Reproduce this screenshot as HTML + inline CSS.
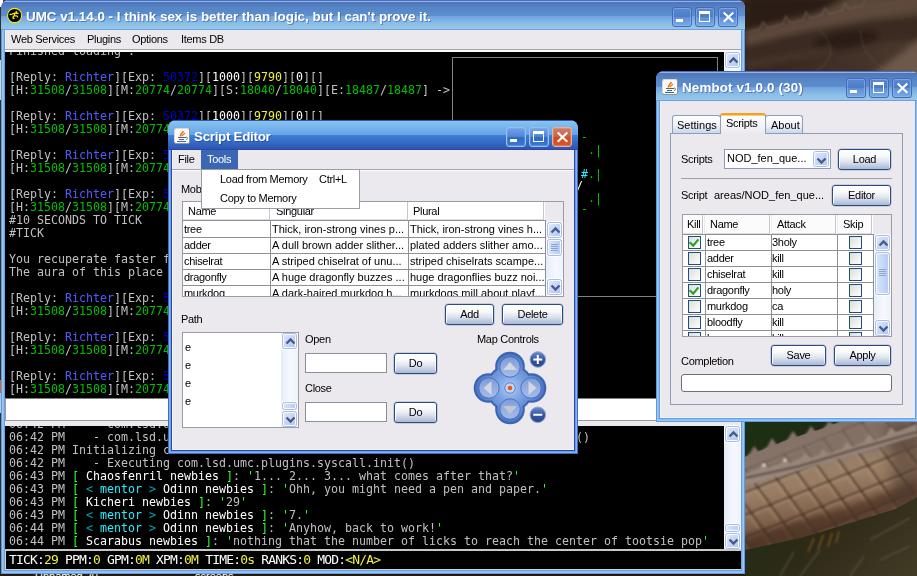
<!DOCTYPE html>
<html>
<head>
<meta charset="utf-8">
<title>UMC</title>
<style>
html,body{margin:0;padding:0;}
body{width:917px;height:576px;position:relative;overflow:hidden;background:#4a382e;font-family:"Liberation Sans",sans-serif;font-size:11px;letter-spacing:-0.3px;color:#000;}
div,span,i{box-sizing:border-box;}
.a{position:absolute;}
.win,#pop{will-change:transform;}
.pg{position:absolute;width:0;height:0;}
/* ---------- desktop ---------- */
#desk{position:absolute;left:0;top:0;width:917px;height:576px;overflow:hidden;background:#46352b;}
/* ---------- windows ---------- */
.win{position:absolute;border-radius:8px 8px 0 0;overflow:hidden;background:#8ebcf0;}
.win .tb{position:absolute;left:0;top:0;right:0;height:30px;
 background:linear-gradient(to bottom,#4a6cc0 0,#4a6cc0 1px,#8fb6e8 1px,#8fb6e8 2px,#4f74b8 2px,#5684c4 8px,#5c90d0 16px,#72a2de 16px,#7cace4 19px,#8cc0e6 24px,#94c8e8 29px,#6f9fe0 29px,#6f9fe0 30px);}
.win .edge{position:absolute;left:0;top:24px;right:0;bottom:0;
 background:#8cbcec;box-shadow:inset 0 0 0 1px #5a9aec,inset 0 0 0 2px #98c8ee,inset 0 0 0 3px #8cbeec,inset 0 0 0 4px #6a9ee8;}
.win .client{position:absolute;left:4px;top:30px;right:4px;bottom:4px;background:#ebe9ed;overflow:hidden;box-shadow:inset 1px -1px 0 0 #f6f2f2;}
.win.act{background:#3a6cd0;}
.win.act .tb{background:linear-gradient(to bottom,#2f55b8 0,#2f55b8 1px,#90ccf2 1px,#84c2ee 2px,#66a2e8 15px,#3a82d6 15px,#3054b4 29px,#2848a4 29px,#2848a4 30px);}
.win.act .edge{background:#3f72d6;box-shadow:inset 0 0 0 1px #3a6cd8,inset 0 0 0 2px #8ab4e8,inset 0 0 0 3px #6a9ae0,inset 0 0 0 4px #2a4ca8;}
.ttl{position:absolute;top:8px;height:18px;line-height:18px;color:#fff;font-weight:bold;font-size:13.4px;white-space:nowrap;text-shadow:1px 1px 0 rgba(20,40,110,.4);}
.cb{position:absolute;top:6.600px;width:20px;height:20px;border-radius:3px;border:1px solid #4668b8;
 background:linear-gradient(to bottom,#5c88d0 0,#4c7cc8 48%,#5c90d6 52%,#7aaae4 100%);box-shadow:inset 0 0 0 1px rgba(150,190,240,.55);}
.win.act .cb{border-color:#98c0ee;background:linear-gradient(to bottom,#74a4e6 0,#4e88da 46%,#2c68c6 54%,#3c7ad2 100%);box-shadow:inset 0 0 0 1px rgba(140,180,236,.35);}
.win.act .cb.x{border-color:#e8b0a0;background:linear-gradient(to bottom,#cc8068 0,#c86448 46%,#d8481c 54%,#d4582e 100%);box-shadow:inset 0 0 0 1px rgba(240,170,150,.35);}
.cb i{position:absolute;display:block;}
.cb.mn i{left:3px;top:11.500px;width:7px;height:3px;background:#fff;}
.cb.mx i{left:3px;top:3.500px;width:11px;height:10.500px;border:1px solid #fff;border-top-width:3px;}
.cb.x svg{position:absolute;left:3px;top:3px;}
/* ---------- generic widgets ---------- */
.t{position:absolute;white-space:nowrap;line-height:14px;height:14px;}
.btn{position:absolute;height:21px;border:1px solid #2a4c86;border-radius:3px;text-align:center;line-height:18px;
 background:linear-gradient(to bottom,#ffffff 0,#f6f8fb 35%,#dde3ee 62%,#a9b8d3 100%);box-shadow:inset 1px 1px 0 0 rgba(255,255,255,.9),inset -1px 0 0 0 rgba(255,255,255,.6),0 0 0 .5px rgba(42,76,134,.35);}
.w0{letter-spacing:0;}
.tf{position:absolute;background:#fff;border:1px solid #8b8f9c;}
.tab{position:absolute;border:1px solid #8e9db8;border-bottom:none;border-radius:3px 3px 0 0;background:linear-gradient(to bottom,#ffffff 0,#f2f4f9 45%,#c6d4ea 100%);}
.tab.sel{background:linear-gradient(to bottom,#fdfdfe 0,#f4f3f7 60%,#ebe9ed 100%);border-top:2px solid #f0a030;box-shadow:inset 0 1px 0 #ffcf5c;}
.th{position:absolute;background:#fbfbfc;border-right:1px solid #fff;box-shadow:inset -1px 0 0 #c8c6cc, inset 0 -1px 0 #dddbe0;}
.gl{background:#8f8f96;}
.ck{position:absolute;width:13px;height:13px;border:1px solid #1c5180;background:linear-gradient(135deg,#dcdcd7,#fff);}
.ck.on::after{content:"";position:absolute;left:2px;top:0px;width:4px;height:7px;border:solid #21a121;border-width:0 2px 2px 0;transform:rotate(40deg);}
/* scrollbars */
.sb{position:absolute;width:17px;background:linear-gradient(to right,#e4ecfb 0,#f6f8fe 55%,#eff3fd 100%);}
.sbb{position:absolute;left:1px;width:15px;height:16px;border:1px solid #a8bce6;border-radius:2.500px;
 background:linear-gradient(135deg,#e2eafd 0,#c6d6f8 50%,#b0c5ee 100%);box-shadow:inset 0 0 0 1px rgba(255,255,255,.85),0 0 0 1px rgba(255,255,255,.9);}
.sbb svg{position:absolute;left:2px;top:3px;}
.sbt{position:absolute;left:1px;width:15px;border:1px solid #a8bce6;border-radius:2.500px;
 background:linear-gradient(to right,#dbe6fc 0,#c6d6f8 55%,#b6c9f0 100%);box-shadow:inset 0 0 0 1px rgba(255,255,255,.85),0 0 0 1px rgba(255,255,255,.9);}
/* mono text */
.mono{letter-spacing:0;font-family:"DejaVu Sans Mono","Liberation Mono",monospace;font-size:11.63px;color:#c0c0c0;}
.ln{height:13px;line-height:13px;white-space:pre;}
.bl{color:#5858ff;}.db{color:#0000c8;}.w{color:#fff;}.y{color:#f0f040;}.gr{color:#00c000;}.lg{color:#30ff30;}.cy{color:#20f0ff;}.dc{color:#00a4b4;}
</style>
</head>
<body>
<div id="desk"></div>
<svg class="a" style="left:0;top:0" width="917" height="576" viewBox="0 0 917 576">
 <defs>
  <filter id="b3" x="-20%" y="-20%" width="140%" height="140%"><feGaussianBlur stdDeviation="3"/></filter>
  <filter id="b1" x="-20%" y="-20%" width="140%" height="140%"><feGaussianBlur stdDeviation="1.2"/></filter>
  <filter id="b6" x="-30%" y="-30%" width="160%" height="160%"><feGaussianBlur stdDeviation="6"/></filter>
  <linearGradient id="tr" x1="0" y1="0" x2="1" y2="0"><stop offset="0" stop-color="#34241c"/><stop offset="1" stop-color="#4c3a30"/></linearGradient>
  <linearGradient id="tail" x1="0" y1="0" x2=".25" y2="1"><stop offset="0" stop-color="#7c6a62"/><stop offset=".3" stop-color="#94806c"/><stop offset=".55" stop-color="#9a7e64"/><stop offset=".8" stop-color="#7c5e48"/><stop offset="1" stop-color="#4a3222"/></linearGradient>
  <linearGradient id="grass" x1="0" y1="0" x2="1" y2="1"><stop offset="0" stop-color="#1c3012"/><stop offset=".25" stop-color="#1e2c14"/><stop offset=".6" stop-color="#2e2a18"/><stop offset="1" stop-color="#423c26"/></linearGradient>
  <pattern id="sc" width="21" height="21" patternUnits="userSpaceOnUse" patternTransform="rotate(-22) skewX(14)">
   <rect width="21" height="21" fill="none"/>
   <path d="M0 0H21M0 0V21" stroke="#3a281c" stroke-width="2.800" opacity=".85"/>
   <path d="M3 3H18V18" stroke="#c0a488" stroke-width="2" opacity=".3" fill="none"/>
  </pattern>
  <clipPath id="ctail"><path d="M745 457L760 451L790 439L822 429L842 421L917 421L917 497L895 509L850 523L800 538L745 550Z"/></clipPath>
 </defs>
 <!-- top right -->
 <rect x="745" y="0" width="172" height="72" fill="url(#tr)"/>
 <g filter="url(#b3)">
  <path d="M745 -4L880 -4L745 30Z" fill="#2c1f19"/>
  <path d="M850 -4L925 -4L925 24L800 40L780 34Z" fill="#594739"/>
  <path d="M745 32L800 19L860 6L917 -6L917 6L860 18L800 31L745 46Z" fill="#5e4a3d"/>
  <path d="M745 46L800 32L870 20L925 14L925 40L860 44L800 56L745 66Z" fill="#3b2a21"/>
  <ellipse cx="846" cy="40" rx="34" ry="9" fill="#2a1c16" opacity=".85" transform="rotate(-8 846 40)"/>
  <path d="M870 76L925 36L925 76Z" fill="#6e5848"/>
  <path d="M745 62L830 46L830 52L745 70Z" fill="#46342a"/>
 </g>
 <g filter="url(#b1)" stroke="#72604f" stroke-width="1.200" fill="none" opacity=".85">
  <path d="M745 33L760 29L763 22L767 28L783 24L786 16L790 23L803 20L806 12L810 18L822 15L825 8L829 14L842 11L845 3L849 9L862 6L866 0"/>
  <path d="M820 30C835 45 835 60 815 72M860 30C862 50 870 62 890 72" opacity=".45"/>
 </g>
 <!-- bottom right -->
 <rect x="745" y="420" width="172" height="156" fill="url(#grass)"/>
 <path d="M745 457L760 451L790 439L822 429L842 421L917 421L917 497L895 509L850 523L800 538L745 550Z" fill="url(#tail)"/>
 <g clip-path="url(#ctail)">
  <rect x="745" y="420" width="172" height="156" fill="url(#sc)" filter="url(#b1)"/>
  <path d="M745 452L760 446L790 433L822 424L836 421L917 421L917 450L860 452L800 466L745 486Z" fill="#7e6c64" opacity=".7" filter="url(#b3)"/>
  <path d="M745 535L800 520L850 506L917 480L917 500L850 525L745 552Z" fill="#4a3224" opacity=".7" filter="url(#b3)"/>
  <path d="M885 421L925 421L925 510L895 505Z" fill="#4e3a2e" opacity=".55" filter="url(#b6)"/>
 </g>
 <g filter="url(#b1)">
  <path d="M745 458L750 453L754 446L759 452L767 447L772 438L777 445L787 440L793 431L798 438L806 434L811 426L816 432L824 428L829 421L834 425L842 421L842 430L745 468Z" fill="#857269" filter="none"/>
  <path d="M745 474L758 469L764 463L768 468L780 464L785 458L789 463L800 459L805 453L810 458L819 455L823 449L828 454L842 449L847 442L852 447L864 442L869 434L874 440L886 435L891 427L896 432L917 424L917 436L745 486Z" fill="#9a8a80" opacity=".9"/>
  <path d="M745 478L800 466L860 448L917 432" stroke="#4e3a2e" stroke-width="2.500" fill="none" opacity=".7"/>
  <circle cx="764" cy="465" r="1.500" fill="#f0ece8"/><circle cx="785" cy="460" r="1.500" fill="#e8e4e0"/>
 </g>
 <g stroke="#8a5c24" stroke-width="1.500" opacity=".8" filter="url(#b1)">
  <path d="M808 552l6-14M818 550l5-15M828 547l4-14M836 543l3-12"/>
 </g>
 <g stroke="#5c5640" stroke-width="1.500" opacity=".7" filter="url(#b1)">
  <path d="M780 576l14-24M800 576l20-26M850 576l14-20M880 560l30-14M870 540l40-22"/>
 </g>
 <!-- left + bottom slivers of desktop -->
 <rect x="0" y="0" width="2" height="576" fill="#3a2c24"/>
 <rect x="0" y="0" width="3" height="7" fill="#fff"/>
 <rect x="0" y="380" width="2" height="13" fill="#d06c24"/>
 <rect x="0" y="393" width="2" height="6" fill="#9cc4f0"/>
 <rect x="0" y="399" width="2" height="14" fill="#c8c8c8"/>
 <rect x="0" y="60" width="2" height="40" fill="#d8d4cc"/>
 <rect x="0" y="574" width="745" height="2" fill="#2a170d"/>
</svg>
<div class="a" style="left:0;top:574px;width:745px;height:2px;overflow:hidden;color:#fff;font-size:11px;letter-spacing:0;"><span class="a" style="left:35px;top:-4px;line-height:13px;white-space:nowrap;">Unnamed 20</span><span class="a" style="left:195px;top:-4px;line-height:13px;white-space:nowrap;">screens</span></div>
<!-- ================= UMC main window ================= -->
<div class="win" id="umc" style="left:1px;top:0;width:744px;height:574px;">
 <div class="edge"></div>
 <div class="tb">
  <svg class="a um" style="left:5px;top:7px" width="18" height="18" viewBox="0 0 18 18"><circle cx="8.600" cy="8.500" r="7.100" fill="#000" stroke="#f4ea00" stroke-width="1.100"/><g transform="translate(.6 .7)"><circle cx="9.700" cy="4.300" r="1" fill="#f4ea00"/><path d="M2.900 6.900L5.600 6.400L8.200 5.400L12 5.600M8.200 5.400L7.700 8L10.800 8.400L11 9.600M7.700 8L6.200 9.400L7.400 10.800L6 11" stroke="#f4ea00" stroke-width="1.200" fill="none" stroke-linejoin="round"/></g></svg>
  <div class="ttl" style="left:25px;letter-spacing:0;">UMC v1.14.0 - I think sex is better than logic, but I can't prove it.</div>
  <div class="cb mn" style="left:671.400px"><i></i></div>
  <div class="cb mx" style="left:694.400px"><i></i></div>
  <div class="cb x" style="left:717.400px"><svg width="13" height="13" viewBox="0 0 13 13"><path d="M1.700 1.600L11.300 10.800M11.300 1.600L1.700 10.800" stroke="#fff" stroke-width="2.100" fill="none"/></svg></div>
 </div>
 <div class="client"><div class="pg" style="left:-5px;top:-30px;">
  <!-- menubar -->
  <div class="t" style="left:11px;top:32px;">Web Services</div>
  <div class="t" style="left:87px;top:32px;">Plugins</div>
  <div class="t" style="left:132px;top:32px;">Options</div>
  <div class="t" style="left:181px;top:32px;">Items DB</div>
  <div class="a" style="left:5px;top:49px;width:736px;height:1px;background:#a6a4aa;"></div>
  <div class="a" style="left:5px;top:50px;width:736px;height:2px;background:#fbfbfc;"></div>
  <!-- upper text pane -->
  <div class="a" style="left:5px;top:52px;width:719px;height:346px;background:#000;overflow:hidden;">
   <div class="a mono" style="left:4px;top:-7px;">
<div class="ln">Finished loading .</div>
<div class="ln">&nbsp;</div>
<div class="ln">[Reply: <span class="bl">Richter</span>][Exp: <span class="db">50372</span>][<span class="w">1000</span>][<span class="y">9790</span>][<span class="w">0</span>][]</div>
<div class="ln">[H:<span class="gr">31508</span>/<span class="gr">31508</span>][M:<span class="gr">20774</span>/<span class="gr">20774</span>][S:<span class="gr">18040</span>/<span class="gr">18040</span>][E:<span class="gr">18487</span>/<span class="gr">18487</span>] -&gt;</div>
<div class="ln">&nbsp;</div>
<div class="ln">[Reply: <span class="bl">Richter</span>][Exp: <span class="db">50372</span>][<span class="w">1000</span>][<span class="y">9790</span>][<span class="w">0</span>][]</div>
<div class="ln">[H:<span class="gr">31508</span>/<span class="gr">31508</span>][M:<span class="gr">20774</span>/<span class="gr">20774</span>][S:<span class="gr">18040</span>/<span class="gr">18040</span>][E:<span class="gr">18487</span>/<span class="gr">18487</span>] -&gt;</div>
<div class="ln">&nbsp;</div>
<div class="ln">[Reply: <span class="bl">Richter</span>][Exp: <span class="db">50372</span>][<span class="w">1000</span>][<span class="y">9790</span>][<span class="w">0</span>][]</div>
<div class="ln">[H:<span class="gr">31508</span>/<span class="gr">31508</span>][M:<span class="gr">20774</span>/<span class="gr">20774</span>][S:<span class="gr">18040</span>/<span class="gr">18040</span>][E:<span class="gr">18487</span>/<span class="gr">18487</span>] -&gt;</div>
<div class="ln">&nbsp;</div>
<div class="ln">[Reply: <span class="bl">Richter</span>][Exp: <span class="db">50372</span>][<span class="w">1000</span>][<span class="y">9790</span>][<span class="w">0</span>][]</div>
<div class="ln">[H:<span class="gr">31508</span>/<span class="gr">31508</span>][M:<span class="gr">20774</span>/<span class="gr">20774</span>][S:<span class="gr">18040</span>/<span class="gr">18040</span>][E:<span class="gr">18487</span>/<span class="gr">18487</span>] -&gt;</div>
<div class="ln">#10 SECONDS TO TICK</div>
<div class="ln">#TICK</div>
<div class="ln">&nbsp;</div>
<div class="ln">You recuperate faster for being in this place of peace.</div>
<div class="ln">The aura of this place soothes your mind and body.</div>
<div class="ln">&nbsp;</div>
<div class="ln">[Reply: <span class="bl">Richter</span>][Exp: <span class="db">50372</span>][<span class="w">1000</span>][<span class="y">9790</span>][<span class="w">0</span>][]</div>
<div class="ln">[H:<span class="gr">31508</span>/<span class="gr">31508</span>][M:<span class="gr">20774</span>/<span class="gr">20774</span>][S:<span class="gr">18040</span>/<span class="gr">18040</span>][E:<span class="gr">18487</span>/<span class="gr">18487</span>] -&gt;</div>
<div class="ln">&nbsp;</div>
<div class="ln">[Reply: <span class="bl">Richter</span>][Exp: <span class="db">50372</span>][<span class="w">1000</span>][<span class="y">9790</span>][<span class="w">0</span>][]</div>
<div class="ln">[H:<span class="gr">31508</span>/<span class="gr">31508</span>][M:<span class="gr">20774</span>/<span class="gr">20774</span>][S:<span class="gr">18040</span>/<span class="gr">18040</span>][E:<span class="gr">18487</span>/<span class="gr">18487</span>] -&gt;</div>
<div class="ln">&nbsp;</div>
<div class="ln">[Reply: <span class="bl">Richter</span>][Exp: <span class="db">50372</span>][<span class="w">1000</span>][<span class="y">9790</span>][<span class="w">0</span>][]</div>
<div class="ln">[H:<span class="gr">31508</span>/<span class="gr">31508</span>][M:<span class="gr">20774</span>/<span class="gr">20774</span>][S:<span class="gr">18040</span>/<span class="gr">18040</span>][E:<span class="gr">18487</span>/<span class="gr">18487</span>] -&gt;</div>
   </div>
   <!-- map box -->
   <div class="a" style="left:447px;top:5px;width:266px;height:240px;border:1px solid #808080;"></div>
   <div class="a mono" style="left:0;top:0;">
    <span class="a gr" style="left:576px;top:78px;">-</span>
    <span class="a gr" style="left:583px;top:91px;">.|</span>
    <span class="a cy" style="left:576px;top:115px;">#</span><span class="a gr" style="left:583px;top:115px;">.|</span>
    <span class="a w" style="left:571px;top:127px;">/</span>
    <span class="a gr" style="left:583px;top:139px;">.|</span>
    <span class="a gr" style="left:576px;top:150px;">-</span>
   </div>
  </div>
  <div class="sb" style="left:724px;top:52px;height:346px;">
   <div class="sbb" style="top:0"><svg width="11" height="9" viewBox="0 0 11 9"><path d="M1.5 6.5l4-4l4 4" stroke="#465a84" stroke-width="2.300" fill="none"/></svg></div>
   <div class="sbb" style="top:330px"><svg width="11" height="9" viewBox="0 0 11 9"><path d="M1.5 2.5l4 4l4-4" stroke="#465a84" stroke-width="2.300" fill="none"/></svg></div>
  </div>
  <!-- input -->
  <div class="tf" style="left:5px;top:398px;width:736px;height:23px;border-color:#9a9a9a;border-top-color:#808080;border-right:none;"></div>
  <!-- lower text pane -->
  <div class="a" style="left:5px;top:426px;width:719px;height:123px;background:#000;overflow:hidden;">
   <div class="a mono" style="left:4px;top:-8px;">
<div class="ln">06:42 PM    - com.lsd.umc.plugins.syscall.init: ok</div>
<div class="ln">06:42 PM    - com.lsd.umc.plugins.syscall.SyscallPlugin.registerNativeEventHandle()</div>
<div class="ln">06:42 PM Initializing core</div>
<div class="ln">06:42 PM    - Executing com.lsd.umc.plugins.syscall.init()</div>
<div class="ln">06:43 PM <span class="lg">[</span> <span class="w">Chaosfenril newbies</span> <span class="lg">]</span>: <span class="lg">'</span>1... 2... 3... what comes after that?<span class="lg">'</span></div>
<div class="ln">06:43 PM <span class="lg">[</span> <span class="dc">&lt;</span> <span class="cy">mentor</span> <span class="dc">&gt;</span> <span class="w">Odinn newbies</span> <span class="lg">]</span>: <span class="lg">'</span>Ohh, you might need a pen and paper.<span class="lg">'</span></div>
<div class="ln">06:43 PM <span class="lg">[</span> <span class="w">Kicheri newbies</span> <span class="lg">]</span>: <span class="lg">'</span>29<span class="lg">'</span></div>
<div class="ln">06:43 PM <span class="lg">[</span> <span class="dc">&lt;</span> <span class="cy">mentor</span> <span class="dc">&gt;</span> <span class="w">Odinn newbies</span> <span class="lg">]</span>: <span class="lg">'</span>7.<span class="lg">'</span></div>
<div class="ln">06:44 PM <span class="lg">[</span> <span class="dc">&lt;</span> <span class="cy">mentor</span> <span class="dc">&gt;</span> <span class="w">Odinn newbies</span> <span class="lg">]</span>: <span class="lg">'</span>Anyhow, back to work!<span class="lg">'</span></div>
<div class="ln">06:44 PM <span class="lg">[</span> <span class="w">Scarabus newbies</span> <span class="lg">]</span>: <span class="lg">'</span>nothing that the number of licks to reach the center of tootsie pop<span class="lg">'</span></div>
   </div>
  </div>
  <div class="sb" style="left:724px;top:426px;height:123px;">
   <div class="sbb" style="top:0"><svg width="11" height="9" viewBox="0 0 11 9"><path d="M1.5 6.5l4-4l4 4" stroke="#465a84" stroke-width="2.300" fill="none"/></svg></div>
   <div class="sbt" style="top:98px;height:8px;"></div>
   <div class="sbb" style="top:107px"><svg width="11" height="9" viewBox="0 0 11 9"><path d="M1.5 2.5l4 4l4-4" stroke="#465a84" stroke-width="2.300" fill="none"/></svg></div>
  </div>
  <!-- status -->
  <div class="a" style="left:5px;top:549px;width:736px;height:2px;background:#c8c8c8;"></div>
  <div class="a" style="left:5px;top:551px;width:736px;height:19px;background:#000;border-left:1px solid #d6d2ce;border-bottom:1px solid #d6d2ce;">
   <div class="a" style="left:3px;top:1px;height:15px;line-height:15px;white-space:pre;color:#fff;letter-spacing:-0.826px;font-family:'DejaVu Sans Mono','Liberation Mono',monospace;font-size:13px;">TICK:<span class="y">29</span> PPM:<span class="y">0</span> GPM:<span class="y">0M</span> XPM:<span class="y">0M</span> TIME:<span class="y">0s</span> RANKS:<span class="y">0</span> MOD:<span class="y">&lt;N/A&gt;</span></div>
  </div>
 </div></div>
</div>
<!-- ================= Nembot ================= -->
<div class="win" id="nem" style="left:656px;top:71px;width:263px;height:351px;">
 <div class="edge"></div>
 <div class="tb">
  <svg class="a jv" style="left:6px;top:8px" width="16" height="16" viewBox="0 0 16 16"><rect x=".5" y=".5" width="15" height="15" rx="1.500" fill="#fbf9f5" stroke="#8d959f"/><path d="M.5 14V1.500Q.5 .5 1.500 .5H14.500" stroke="#dcd8d0" fill="none"/><path d="M6.600 8.500C5.600 6.100 8.600 5.100 9.500 3.100" stroke="#e8700e" stroke-width="1.500" fill="none"/><path d="M7.900 8.100C8.300 6.500 10.300 6.500 10.800 4.800" stroke="#e8700e" stroke-width="1.200" fill="none"/><path d="M4 9.500h8M5 11.500h5M3 13.500h9" stroke="#466688" stroke-width="1" fill="none"/><path d="M12 9c2 .2 2 2.300 0 2.500" stroke="#466688" stroke-width=".9" fill="none"/></svg>
  <div class="ttl" style="left:26px;letter-spacing:0.14px;">Nembot v1.0.0 (30)</div>
  <div class="cb mn" style="left:190.300px"><i></i></div>
  <div class="cb mx" style="left:213.300px"><i></i></div>
  <div class="cb x" style="left:236.300px"><svg width="13" height="13" viewBox="0 0 13 13"><path d="M1.700 1.600L11.300 10.800M11.300 1.600L1.700 10.800" stroke="#fff" stroke-width="2.100" fill="none"/></svg></div>
 </div>
 <div class="client"><div class="pg" style="left:-660px;top:-101px;">
  <!-- tabs -->
  <div class="tab" style="left:672px;top:115px;width:49px;height:19px;"></div>
  <div class="tab" style="left:765px;top:115px;width:38px;height:19px;"></div>
  <div class="a" style="left:670px;top:133px;width:233px;height:272px;border:1px solid #8e9db8;background:#ebe9ed;"></div>
  <div class="tab sel" style="left:720px;top:113px;width:46px;height:21px;"></div>
  <div class="t w0" style="left:677px;top:118px;">Settings</div>
  <div class="t" style="left:726px;top:116px;">Scripts</div>
  <div class="t w0" style="left:771px;top:118px;">About</div>
  <!-- row 1 -->
  <div class="t" style="left:681px;top:152px;">Scripts</div>
  <div class="tf" style="left:724px;top:149px;width:107px;height:20px;border-color:#8b9ab5;"></div>
  <div class="t w0" style="left:727px;top:151px;">NOD_fen_que...</div>
  <div class="sbb" style="left:813px;top:151px;width:16px;height:16px;"><svg width="11" height="9" viewBox="0 0 11 9" style="left:2px;top:4px"><path d="M1.5 2.5l4 4l4-4" stroke="#465a84" stroke-width="2.300" fill="none"/></svg></div>
  <div class="btn" style="left:838px;top:149px;width:53px;">Load</div>
  <div class="a" style="left:681px;top:178px;width:211px;height:1px;background:#a0a0a4;"></div>
  <!-- row 2 -->
  <div class="t" style="left:681px;top:188px;">Script</div>
  <div class="t w0" style="left:714px;top:188px;">areas/NOD_fen_que...</div>
  <div class="btn" style="left:832px;top:185px;width:59px;">Editor</div>
  <!-- table -->
  <div class="a" style="left:682px;top:214px;width:210px;height:123px;border:1px solid #9c9ca4;background:#ebe9ed;overflow:hidden;">
   <div class="pg" style="left:-683px;top:-215px;">
    <div class="th" style="left:683px;top:215px;width:21px;height:19px;"></div>
    <div class="th" style="left:705px;top:215px;width:66px;height:19px;"></div>
    <div class="th" style="left:772px;top:215px;width:65px;height:19px;"></div>
    <div class="th" style="left:838px;top:215px;width:35px;height:19px;"></div>
    <div class="t" style="left:687px;top:217px;">Kill</div>
    <div class="t" style="left:710px;top:217px;">Name</div>
    <div class="t" style="left:777px;top:217px;">Attack</div>
    <div class="t" style="left:843px;top:217px;">Skip</div>
    <div class="a" style="left:683px;top:234px;width:191px;height:103px;background:#fff;"></div>
    <!-- grid lines -->
    <div class="a gl" style="left:683px;top:234px;width:191px;height:1px;"></div>
    <div class="a gl" style="left:683px;top:250px;width:191px;height:1px;"></div>
    <div class="a gl" style="left:683px;top:266px;width:191px;height:1px;"></div>
    <div class="a gl" style="left:683px;top:282px;width:191px;height:1px;"></div>
    <div class="a gl" style="left:683px;top:298px;width:191px;height:1px;"></div>
    <div class="a gl" style="left:683px;top:314px;width:191px;height:1px;"></div>
    <div class="a gl" style="left:683px;top:330px;width:191px;height:1px;"></div>
    <div class="a gl" style="left:705px;top:234px;width:1px;height:103px;"></div>
    <div class="a gl" style="left:771px;top:234px;width:1px;height:103px;"></div>
    <div class="a gl" style="left:837px;top:234px;width:1px;height:103px;"></div>
    <div class="a gl" style="left:873px;top:234px;width:1px;height:103px;"></div>
    <!-- rows -->
    <div class="ck on" style="left:688px;top:236px;"></div><div class="t" style="left:707px;top:235px;">tree</div><div class="t" style="left:772px;top:235px;">3holy</div><div class="ck" style="left:849px;top:236px;"></div>
    <div class="ck" style="left:688px;top:252px;"></div><div class="t" style="left:707px;top:251px;">adder</div><div class="t" style="left:772px;top:251px;">kill</div><div class="ck" style="left:849px;top:252px;"></div>
    <div class="ck" style="left:688px;top:268px;"></div><div class="t" style="left:707px;top:267px;">chiselrat</div><div class="t" style="left:772px;top:267px;">kill</div><div class="ck" style="left:849px;top:268px;"></div>
    <div class="ck on" style="left:688px;top:284px;"></div><div class="t" style="left:707px;top:283px;">dragonfly</div><div class="t" style="left:772px;top:283px;">holy</div><div class="ck" style="left:849px;top:284px;"></div>
    <div class="ck" style="left:688px;top:300px;"></div><div class="t" style="left:707px;top:299px;">murkdog</div><div class="t" style="left:772px;top:299px;">ca</div><div class="ck" style="left:849px;top:300px;"></div>
    <div class="ck" style="left:688px;top:316px;"></div><div class="t" style="left:707px;top:315px;">bloodfly</div><div class="t" style="left:772px;top:315px;">kill</div><div class="ck" style="left:849px;top:316px;"></div>
    <div class="ck" style="left:688px;top:332px;"></div><div class="t" style="left:707px;top:331px;">leap</div><div class="t" style="left:772px;top:331px;">kill</div><div class="ck" style="left:849px;top:332px;"></div>
    <!-- scrollbar -->
    <div class="sb" style="left:874px;top:235px;height:102px;">
     <div class="sbb" style="top:0"><svg width="11" height="9" viewBox="0 0 11 9"><path d="M1.5 6.5l4-4l4 4" stroke="#465a84" stroke-width="2.300" fill="none"/></svg></div>
     <div class="sbt" style="top:17px;height:43px;"><svg class="a" style="left:3px;top:16px" width="7" height="8" viewBox="0 0 7 8"><path d="M0 .5h7M0 2.500h7M0 4.500h7M0 6.500h7" stroke="#8fa4cc" stroke-width="1"/></svg></div>
     <div class="sbb" style="top:85px"><svg width="11" height="9" viewBox="0 0 11 9"><path d="M1.5 2.5l4 4l4-4" stroke="#465a84" stroke-width="2.300" fill="none"/></svg></div>
    </div>
   </div>
  </div>
  <!-- bottom -->
  <div class="btn" style="left:771px;top:345px;width:55px;">Save</div>
  <div class="btn" style="left:834px;top:345px;width:57px;">Apply</div>
  <div class="t" style="left:681px;top:354px;">Completion</div>
  <div class="tf" style="left:681px;top:374px;width:211px;height:18px;border-radius:3px;border-color:#6e6e74;"></div>
 </div></div>
</div>
<!-- ================= Script Editor ================= -->
<div class="win act" id="se" style="left:168px;top:120px;width:410px;height:334px;">
 <div class="edge"></div>
 <div class="tb">
  <svg class="a jv" style="left:6px;top:8px" width="16" height="16" viewBox="0 0 16 16"><rect x=".5" y=".5" width="15" height="15" rx="1.500" fill="#fbf9f5" stroke="#8d959f"/><path d="M.5 14V1.500Q.5 .5 1.500 .5H14.500" stroke="#dcd8d0" fill="none"/><path d="M6.600 8.500C5.600 6.100 8.600 5.100 9.500 3.100" stroke="#e8700e" stroke-width="1.500" fill="none"/><path d="M7.900 8.100C8.300 6.500 10.300 6.500 10.800 4.800" stroke="#e8700e" stroke-width="1.200" fill="none"/><path d="M4 9.500h8M5 11.500h5M3 13.500h9" stroke="#466688" stroke-width="1" fill="none"/><path d="M12 9c2 .2 2 2.300 0 2.500" stroke="#466688" stroke-width=".9" fill="none"/></svg>
  <div class="ttl" style="left:26px;">Script Editor</div>
  <div class="cb mn" style="left:337.800px"><i></i></div>
  <div class="cb mx" style="left:360.800px"><i></i></div>
  <div class="cb x" style="left:383.800px"><svg width="13" height="13" viewBox="0 0 13 13"><path d="M1.700 1.600L11.300 10.800M11.300 1.600L1.700 10.800" stroke="#fff" stroke-width="2.100" fill="none"/></svg></div>
 </div>
 <div class="client"><div class="pg" style="left:-172px;top:-150px;">
  <!-- menubar -->
  <div class="a" style="left:201px;top:150px;width:37px;height:19px;background:#3a66b4;"></div>
  <div class="t" style="left:178px;top:152px;">File</div>
  <div class="t" style="left:207px;top:152px;color:#fff;">Tools</div>
  <div class="a" style="left:172px;top:169px;width:402px;height:1px;background:#a6a4aa;"></div>
  <div class="a" style="left:172px;top:170px;width:402px;height:1px;background:#fbfbfc;"></div>
  <div class="t" style="left:181px;top:182px;">Mobs</div>
  <!-- mobs table -->
  <div class="a" style="left:182px;top:201px;width:382px;height:96px;border:1px solid #9c9ca4;background:#ebe9ed;overflow:hidden;">
   <div class="pg" style="left:-183px;top:-202px;">
    <div class="th" style="left:183px;top:202px;width:88px;height:18px;background:#fff;"></div>
    <div class="th" style="left:271px;top:202px;width:138px;height:18px;background:#fff;"></div>
    <div class="th" style="left:409px;top:202px;width:136px;height:18px;background:#fff;"></div>
    <div class="t" style="left:188px;top:204px;">Name</div>
    <div class="t" style="left:276px;top:204px;">Singular</div>
    <div class="t" style="left:413px;top:204px;">Plural</div>
    <div class="a" style="left:183px;top:220px;width:363px;height:77px;background:#fff;"></div>
    <div class="a gl" style="left:183px;top:220px;width:363px;height:1px;"></div>
    <div class="a gl" style="left:183px;top:237px;width:363px;height:1px;"></div>
    <div class="a gl" style="left:183px;top:253px;width:363px;height:1px;"></div>
    <div class="a gl" style="left:183px;top:269px;width:363px;height:1px;"></div>
    <div class="a gl" style="left:183px;top:285px;width:363px;height:1px;"></div>
    <div class="a gl" style="left:270px;top:220px;width:1px;height:77px;"></div>
    <div class="a gl" style="left:408px;top:220px;width:1px;height:77px;"></div>
    <div class="a gl" style="left:545px;top:220px;width:1px;height:77px;"></div>
    <div class="t" style="left:184px;top:222px;">tree</div><div class="t w0" style="left:272px;top:222px;">Thick, iron-strong vines p...</div><div class="t w0" style="left:410px;top:222px;">Thick, iron-strong vines h...</div>
    <div class="t" style="left:184px;top:238px;">adder</div><div class="t w0" style="left:272px;top:238px;">A dull brown adder slither...</div><div class="t w0" style="left:410px;top:238px;">plated adders slither amo...</div>
    <div class="t" style="left:184px;top:254px;">chiselrat</div><div class="t w0" style="left:272px;top:254px;">A striped chiselrat of unu...</div><div class="t w0" style="left:410px;top:254px;">striped chiselrats scampe...</div>
    <div class="t" style="left:184px;top:270px;">dragonfly</div><div class="t w0" style="left:272px;top:270px;">A huge dragonfly buzzes ...</div><div class="t w0" style="left:410px;top:270px;">huge dragonflies buzz noi...</div>
    <div class="t" style="left:184px;top:286px;">murkdog</div><div class="t w0" style="left:272px;top:286px;">A dark-haired murkdog h...</div><div class="t w0" style="left:410px;top:286px;">murkdogs mill about playf...</div>
    <div class="sb" style="left:546px;top:222px;height:75px;">
     <div class="sbb" style="top:0"><svg width="11" height="9" viewBox="0 0 11 9"><path d="M1.5 6.5l4-4l4 4" stroke="#465a84" stroke-width="2.300" fill="none"/></svg></div>
     <div class="sbt" style="top:17px;height:17px;"><svg class="a" style="left:3px;top:4px" width="7" height="8" viewBox="0 0 7 8"><path d="M0 .5h7M0 2.500h7M0 4.500h7M0 6.500h7" stroke="#8fa4cc" stroke-width="1"/></svg></div>
     <div class="sbb" style="top:57px"><svg width="11" height="9" viewBox="0 0 11 9"><path d="M1.5 2.5l4 4l4-4" stroke="#465a84" stroke-width="2.300" fill="none"/></svg></div>
    </div>
   </div>
  </div>
  <div class="btn" style="left:445px;top:304px;width:49px;">Add</div>
  <div class="btn" style="left:502px;top:304px;width:61px;">Delete</div>
  <!-- path -->
  <div class="t" style="left:181px;top:312px;">Path</div>
  <div class="a" style="left:182px;top:332px;width:117px;height:96px;border:1px solid #9c9ca4;background:#fff;overflow:hidden;">
   <div class="pg" style="left:-183px;top:-333px;">
    <div class="t" style="left:185px;top:340px;">e</div>
    <div class="t" style="left:185px;top:358px;">e</div>
    <div class="t" style="left:185px;top:376px;">e</div>
    <div class="t" style="left:185px;top:394px;">e</div>
    <div class="sb" style="left:281px;top:333px;height:94px;">
     <div class="sbb" style="top:0"><svg width="11" height="9" viewBox="0 0 11 9"><path d="M1.5 6.5l4-4l4 4" stroke="#465a84" stroke-width="2.300" fill="none"/></svg></div>
     <div class="sbt" style="top:69px;height:8px;"></div>
     <div class="sbb" style="top:78px"><svg width="11" height="9" viewBox="0 0 11 9"><path d="M1.5 2.5l4 4l4-4" stroke="#465a84" stroke-width="2.300" fill="none"/></svg></div>
    </div>
   </div>
  </div>
  <div class="t" style="left:305px;top:332px;">Open</div>
  <div class="tf" style="left:305px;top:353px;width:82px;height:20px;"></div>
  <div class="btn" style="left:394px;top:353px;width:43px;">Do</div>
  <div class="t" style="left:305px;top:381px;">Close</div>
  <div class="tf" style="left:305px;top:402px;width:82px;height:20px;"></div>
  <div class="btn" style="left:394px;top:402px;width:43px;">Do</div>
  <!-- map controls -->
  <div class="t" style="left:477px;top:332px;">Map Controls</div>
  <svg class="a" style="left:470px;top:348px" width="80" height="80" viewBox="0 0 80 80">
   <defs>
    <radialGradient id="mg" gradientUnits="userSpaceOnUse" cx="40" cy="40" r="36"><stop offset="0" stop-color="#b0ccf6"/><stop offset=".35" stop-color="#7fa4e4"/><stop offset=".75" stop-color="#5a84d0"/><stop offset="1" stop-color="#4870c0"/></radialGradient>
    <linearGradient id="bg2" x1="0" y1="0" x2="0" y2="1"><stop offset="0" stop-color="#7c9cd8"/><stop offset=".5" stop-color="#93aee0"/><stop offset="1" stop-color="#a4bcea"/></linearGradient>
    <linearGradient id="pm" x1="0" y1="0" x2="0" y2="1"><stop offset="0" stop-color="#6a8ed0"/><stop offset=".5" stop-color="#34569e"/><stop offset="1" stop-color="#2a4890"/></linearGradient>
   </defs>
   <g fill="#3c64b4"><circle cx="40" cy="18.500" r="14.800"/><circle cx="40" cy="61.500" r="14.800"/><circle cx="18.500" cy="40" r="14.800"/><circle cx="61.500" cy="40" r="14.800"/><circle cx="40" cy="40" r="24"/></g>
   <g fill="url(#mg)"><circle cx="40" cy="18.500" r="12.600"/><circle cx="40" cy="61.500" r="12.600"/><circle cx="18.500" cy="40" r="12.600"/><circle cx="61.500" cy="40" r="12.600"/><circle cx="40" cy="40" r="22"/></g>
   <g fill="url(#bg2)" stroke="#4a6cb8" stroke-width=".9"><circle cx="40" cy="19" r="10.200"/><circle cx="40" cy="61" r="10.200"/><circle cx="19" cy="40" r="10.200"/><circle cx="61" cy="40" r="10.200"/></g>
   <path d="M40 14l7 8h-14z" fill="#d2d6e2"/>
   <path d="M40 66l7-8h-14z" fill="#c2c6d6"/>
   <path d="M13.500 40l8-7v14z" fill="#d2d6e2"/>
   <path d="M66.500 40l-8-7v14z" fill="#d2d6e2"/>
   <circle cx="40" cy="40" r="5.200" fill="#c4d4f2" stroke="#5a7cc4" stroke-width=".9"/>
   <circle cx="40" cy="40" r="2.300" fill="#e85a18"/>
   <circle cx="67.800" cy="11.500" r="7.800" fill="url(#pm)" stroke="#90a8d8" stroke-width="1"/>
   <path d="M63.300 11.500h9M67.800 7v9" stroke="#fff" stroke-width="2"/>
   <circle cx="67.800" cy="66.800" r="7.800" fill="url(#pm)" stroke="#90a8d8" stroke-width="1"/>
   <path d="M63.300 66.800h9" stroke="#fff" stroke-width="2"/>
  </svg>
 </div></div>
</div>
<!-- Tools popup -->
<div class="a" id="pop" style="left:201px;top:169px;width:159px;height:40px;background:#fff;border:1px solid #9c9ca4;">
 <div class="t" style="left:18px;top:2px;">Load from Memory</div>
 <div class="t" style="left:117px;top:2px;">Ctrl+L</div>
 <div class="t" style="left:18px;top:21px;">Copy to Memory</div>
</div>
</body>
</html>
